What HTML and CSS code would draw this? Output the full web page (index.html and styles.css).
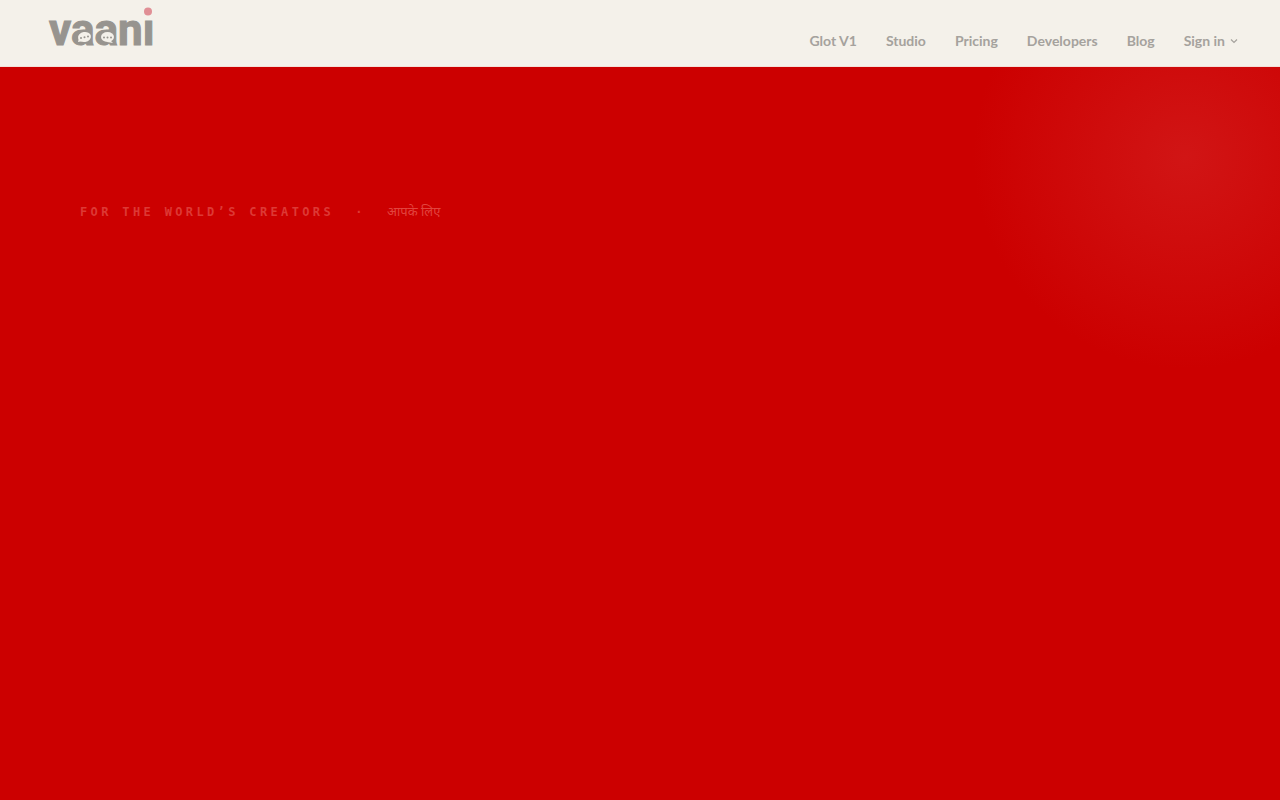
FILE: index.html
```html
<!DOCTYPE html>
<html lang="en">
<head>
<meta charset="utf-8">
<meta name="viewport" content="width=device-width, initial-scale=1">
<title>vaani</title>
<link rel="stylesheet" href="styles.css">
</head>
<body>
<header class="site-header">
  <a class="brand" href="#" aria-label="vaani">
    <svg class="brand-logo" width="112" height="60" viewBox="0 0 112 60">
      <text class="brand-word" x="1" y="45">vaani</text>
      <g class="brand-bubbles">
        <ellipse cx="36.500" cy="37" rx="6.500" ry="5" transform="rotate(-10 36.500 37)"/>
        <path d="M31 38l-1 4 5-1z"/>
        <ellipse cx="59.500" cy="37" rx="6.500" ry="5"/>
        <path d="M62 40l3 3-6-1z"/>
      </g>
      <g class="brand-dots">
        <circle cx="33" cy="38" r="1"/><circle cx="36.500" cy="37.300" r="1"/><circle cx="40" cy="36.500" r="1"/>
        <circle cx="56" cy="37.500" r="1"/><circle cx="59.500" cy="37.500" r="1"/><circle cx="63" cy="37.500" r="1"/>
      </g>
      <rect class="brand-clear" x="94" y="5" width="16" height="14"/>
      <circle class="brand-tittle" cx="100" cy="11.500" r="4"/>
    </svg>
  </a>
  <nav class="site-nav" aria-label="Main">
    <a href="#">Glot V1</a>
    <a href="#">Studio</a>
    <a href="#">Pricing</a>
    <a href="#">Developers</a>
    <a href="#">Blog</a>
    <button class="sign-in" type="button">Sign in
      <svg width="8" height="8" viewBox="0 0 8 8" aria-hidden="true"><path d="M1 2.500L4 5.500L7 2.500"/></svg>
    </button>
  </nav>
</header>
<main class="hero">
  <p class="eyebrow">FOR THE WORLD’S CREATORS&nbsp; ·&nbsp; <span class="eyebrow-hindi" lang="hi">आपके लिए</span></p>
</main>
</body>
</html>
```

FILE: styles.css
```css
* { box-sizing: border-box; }
body {
  margin: 0;
  min-height: 100vh;
  display: flex;
  flex-direction: column;
  background: #cc0000;
  font-family: Lato, "Noto Sans", sans-serif;
}
.site-header {
  display: flex;
  justify-content: space-between;
  align-items: flex-start;
  padding: 0 42px 6px 48px;
  background: #f4f1ea;
  border-bottom: 1px solid #f3dfd8;
}
.brand { display: block; }
.brand-logo { display: block; overflow: visible; }
.brand-word {
  fill: #97948f;
  stroke: #97948f;
  stroke-width: 1px;
  font: bold 44px Roboto, "Liberation Sans", sans-serif;
}
.brand-bubbles, .brand-clear { fill: #f4f1ea; }
.brand-dots { fill: #97948f; }
.brand-tittle { fill: #e08f95; }
.site-nav {
  display: flex;
  gap: 29px;
  padding-top: 31px;
  font-size: 14px;
  font-weight: 700;
  line-height: 20px;
}
.site-nav a, .sign-in { color: #a5a29d; text-decoration: none; }
.sign-in {
  display: flex;
  align-items: center;
  gap: 5px;
  margin: 0;
  padding: 0;
  border: 0;
  background: none;
  font: inherit;
}
.sign-in svg { fill: none; stroke: currentColor; stroke-width: 1.2; }
.hero {
  flex: 1;
  padding: 133px 80px;
  background: radial-gradient(circle 212px at right 95px top 90px, #d11515, #cc0000);
}
.eyebrow {
  margin: 0;
  color: #dd3935;
  font-family: "DejaVu Sans Mono", monospace;
  font-size: 12px;
  font-weight: 700;
  line-height: 24px;
  letter-spacing: 0.28em;
}
.eyebrow-hindi {
  color: #e2443f;
  font-family: "Noto Sans Devanagari", "Noto Sans", sans-serif;
  font-size: 13px;
  font-weight: 400;
  letter-spacing: normal;
}
```
